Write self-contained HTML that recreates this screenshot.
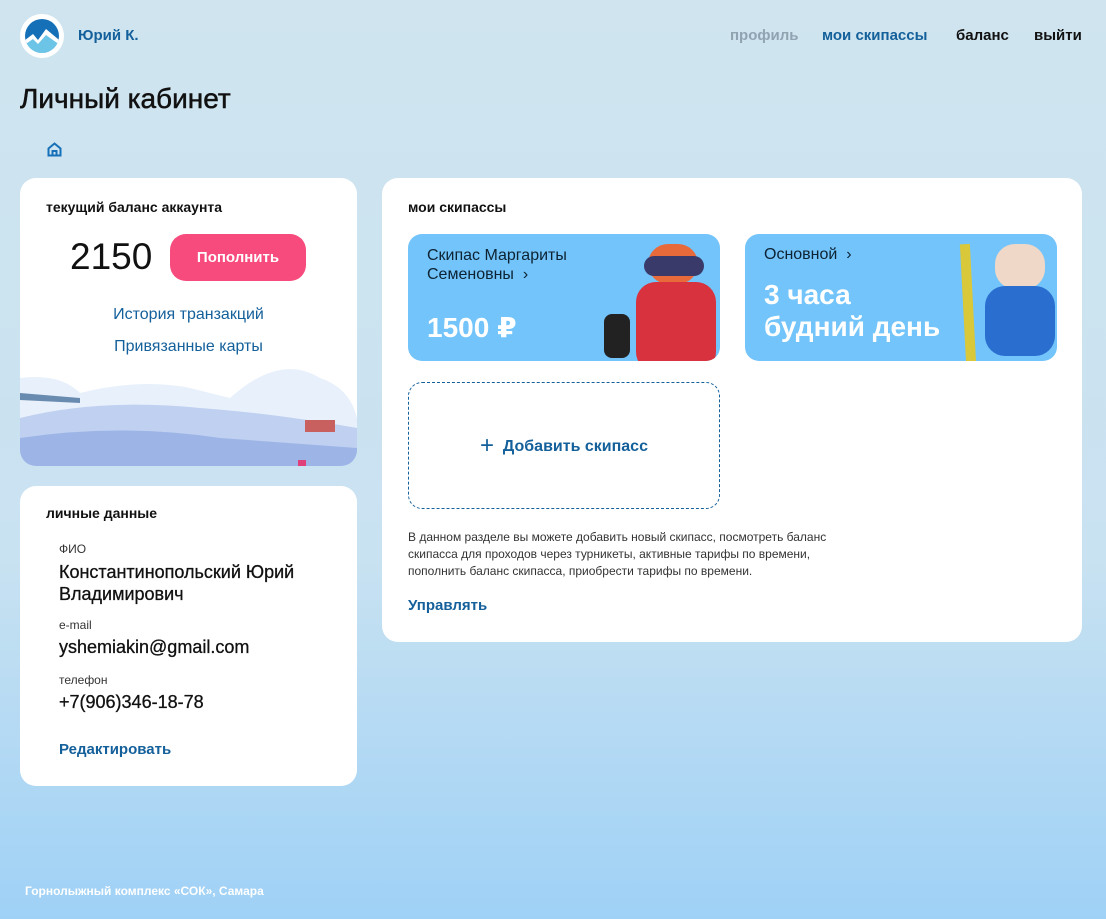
<!DOCTYPE html>
<html><head><meta charset="utf-8"><style>
*{margin:0;padding:0;box-sizing:border-box}
body{width:1106px;height:919px;overflow:hidden;font-family:"Liberation Sans","DejaVu Sans",sans-serif;background:linear-gradient(#cfe4ef 0%,#c9e2f1 60%,#9fd1f6 100%);position:relative;color:#111}
.a{position:absolute}
.card{position:absolute;background:#fff;border-radius:16px;overflow:hidden}
.blue{color:#14609b}
.sp{position:absolute;border-radius:14px;background:#72c4fa;overflow:hidden;color:#fff}
</style></head><body>
<div class="a" style="left:20px;top:14px;width:44px;height:44px;border-radius:50%;background:#fff">
<svg width="44" height="44" viewBox="0 0 44 44"><defs><clipPath id="c"><circle cx="22" cy="22" r="17"/></clipPath></defs><g clip-path="url(#c)"><rect x="0" y="0" width="44" height="44" fill="#1570b8"/><path d="M0 30 L13 20 L18 26 L26 15 L44 30 L44 44 L0 44Z" fill="#fff"/><path d="M0 34 L13 25 L18 30 L26 21 L44 34 L44 44 L0 44Z" fill="#6cc4e6"/></g></svg></div>
<div class="a blue" style="left:78px;top:27px;font-size:15px;font-weight:bold">Юрий К.</div>
<div class="a" style="left:730px;top:27px;font-size:15px;font-weight:bold;color:#8fa4b0">профиль</div>
<div class="a blue" style="left:822px;top:27px;font-size:15px;font-weight:bold">мои скипассы</div>
<div class="a" style="left:956px;top:27px;font-size:15px;font-weight:bold">баланс</div>
<div class="a" style="left:1034px;top:27px;font-size:15px;font-weight:bold">выйти</div>
<div class="a" style="left:20px;top:83px;font-size:28px;-webkit-text-stroke:0.5px #111">Личный кабинет</div>
<svg class="a" style="left:46px;top:141px" width="17" height="17" viewBox="0 0 17 17"><path d="M2.5 7.5 L8.5 2.5 L14.5 7.5 V14.5 H2.5Z M6.5 14.5 V10 H10.5 V14.5" fill="none" stroke="#1570b8" stroke-width="2"/></svg>

<div class="card" style="left:20px;top:178px;width:337px;height:288px">
<div class="a" style="left:26px;top:21px;font-size:14px;font-weight:bold">текущий баланс аккаунта</div>
<div class="a" style="left:50px;top:58px;font-size:37px">2150</div>
<div class="a" style="left:150px;top:56px;width:136px;height:47px;border-radius:16px;background:#f74a7d;color:#fff;font-size:15px;font-weight:bold;text-align:center;line-height:47px">Пополнить</div>
<div class="a blue" style="left:0;width:337px;top:128px;text-align:center;font-size:16px">История транзакций</div>
<div class="a blue" style="left:0;width:337px;top:160px;text-align:center;font-size:16px">Привязанные карты</div>
<svg class="a" style="left:0;top:180px" width="337" height="108" viewBox="0 0 337 108">
<path d="M0 20 Q40 15 60 35 Q120 20 170 30 L210 40 Q260 -5 300 20 Q330 30 337 60 L337 108 L0 108Z" fill="#e8f0fb"/>
<path d="M0 60 Q80 40 180 50 Q250 55 337 70 L337 108 L0 108Z" fill="#bfd0f0"/>
<path d="M0 80 Q100 65 200 80 L337 90 L337 108 L0 108Z" fill="#9db5e6"/>
<rect x="285" y="62" width="30" height="12" fill="#c96060"/>
<rect x="278" y="102" width="8" height="6" fill="#e0407a"/>
<path d="M0 35 L60 40 L60 45 L0 42Z" fill="#6a8bb0"/>
</svg>
</div>

<div class="card" style="left:20px;top:486px;width:337px;height:300px">
<div class="a" style="left:26px;top:19px;font-size:14px;font-weight:bold">личные данные</div>
<div class="a" style="left:39px;top:56px;font-size:12px;color:#333">ФИО</div>
<div class="a" style="left:39px;top:75px;font-size:18px;line-height:22px;-webkit-text-stroke:0.3px #111">Константинопольский Юрий<br>Владимирович</div>
<div class="a" style="left:39px;top:132px;font-size:12px;color:#333">e-mail</div>
<div class="a" style="left:39px;top:151px;font-size:18px;-webkit-text-stroke:0.3px #111">yshemiakin@gmail.com</div>
<div class="a" style="left:39px;top:187px;font-size:12px;color:#333">телефон</div>
<div class="a" style="left:39px;top:206px;font-size:18px;-webkit-text-stroke:0.3px #111">+7(906)346-18-78</div>
<div class="a blue" style="left:39px;top:255px;font-size:15px;font-weight:bold">Редактировать</div>
</div>

<div class="card" style="left:382px;top:178px;width:700px;height:464px">
<div class="a" style="left:26px;top:21px;font-size:14px;font-weight:bold">мои скипассы</div>
<div class="sp" style="left:26px;top:56px;width:312px;height:127px">
<div class="a" style="left:19px;top:12px;font-size:16px;color:#0d2233;line-height:19px">Скипас Маргариты<br>Семеновны &nbsp;›</div>
<div class="a" style="left:19px;top:77px;font-size:28px;font-weight:bold">1500 ₽</div>
<div class="a" style="left:240px;top:10px;width:50px;height:40px;border-radius:20px;background:#e86a3a"></div>
<div class="a" style="left:236px;top:22px;width:60px;height:20px;border-radius:10px;background:#3a3a6a"></div>
<div class="a" style="left:228px;top:48px;width:80px;height:90px;border-radius:20px;background:#d8323e"></div>
<div class="a" style="left:196px;top:80px;width:26px;height:44px;border-radius:8px;background:#222"></div>
</div>
<div class="sp" style="left:363px;top:56px;width:312px;height:127px">
<div class="a" style="left:19px;top:12px;font-size:16px;color:#0d2233">Основной &nbsp;›</div>
<div class="a" style="left:19px;top:45px;font-size:28px;font-weight:bold;line-height:32px">3 часа<br>будний день</div>
<div class="a" style="left:218px;top:10px;width:10px;height:120px;background:#d8c83a;transform:rotate(-3deg)"></div>
<div class="a" style="left:250px;top:10px;width:50px;height:45px;border-radius:20px;background:#f0d8c8"></div>
<div class="a" style="left:240px;top:52px;width:70px;height:70px;border-radius:20px;background:#2a6ed0"></div>
</div>
<div class="a" style="left:26px;top:204px;width:312px;height:127px;border:1px dashed #14609b;border-radius:14px;text-align:center;line-height:125px;font-size:16px;font-weight:bold" ><span class="blue"><span style="font-size:24px;font-weight:normal;vertical-align:-2px">+</span>&nbsp; Добавить скипасс</span></div>
<div class="a" style="left:26px;top:351px;font-size:12px;color:#333;line-height:17px;width:462px">В данном разделе вы можете добавить новый скипасс, посмотреть баланс скипасса для проходов через турникеты, активные тарифы по времени, пополнить баланс скипасса, приобрести тарифы по времени.</div>
<div class="a blue" style="left:26px;top:419px;font-size:15px;font-weight:bold">Управлять</div>
</div>

<div class="a" style="left:25px;top:884px;font-size:12px;color:#fff;font-weight:bold">Горнолыжный комплекс «СОК», Самара</div>
</body></html>
